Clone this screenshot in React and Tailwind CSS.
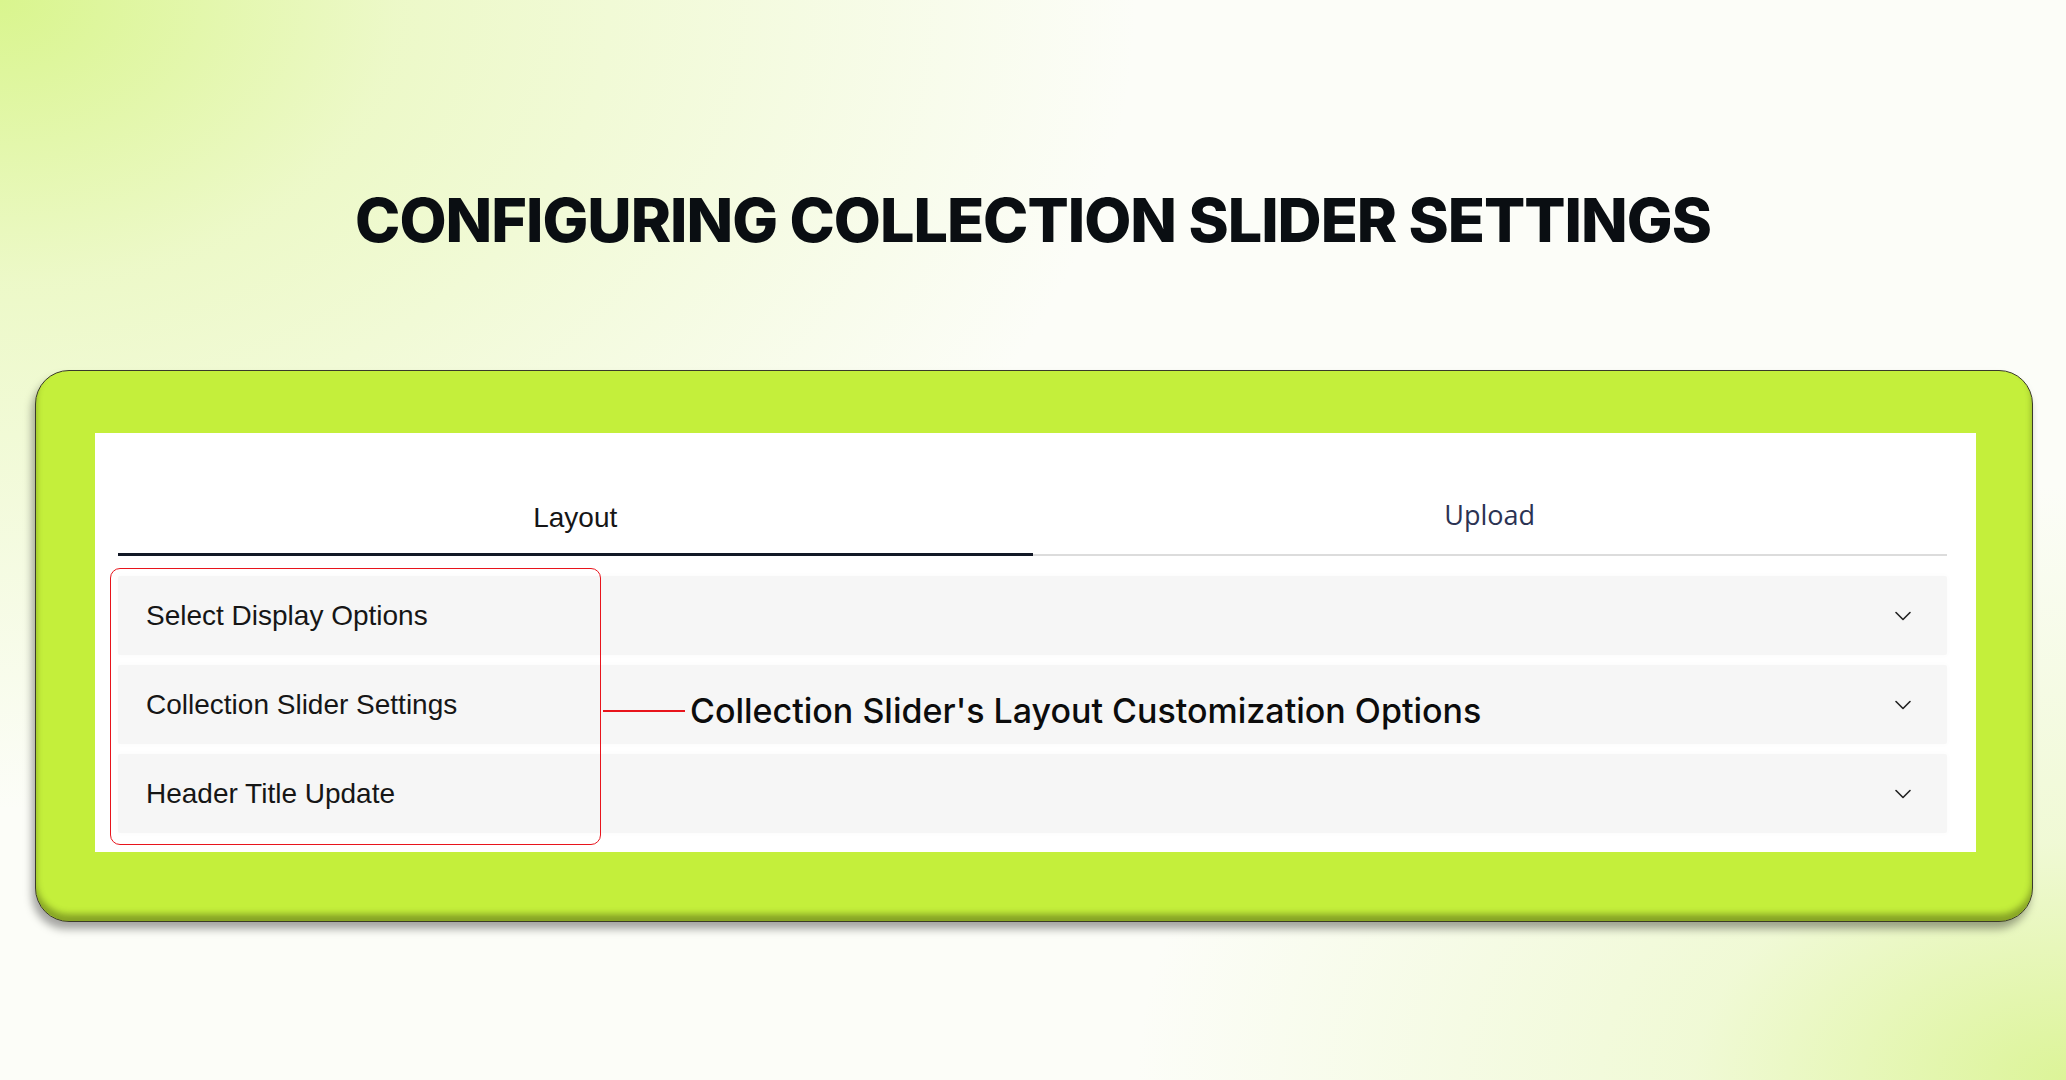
import { ChevronDown } from "lucide-react";

const sections = ["Select Display Options", "Collection Slider Settings", "Header Title Update"];

function AccordionRow({ title }) {
  return (
    <div className="flex h-[79px] items-center justify-between rounded-[2px] bg-[#f6f6f6] pl-[28px] pr-[30px] shadow-[0_0_6px_rgba(0,0,0,0.025)]">
      <span className="font-['Liberation_Sans',Arial,sans-serif] text-[28px] leading-none text-[#161616]">{title}</span>
      <ChevronDown size={28} strokeWidth={1.4} className="text-[#222]" />
    </div>
  );
}

export default function App() {
  return (
    <div className="min-h-[1080px] w-full overflow-hidden bg-[#fcfdf8] bg-[radial-gradient(ellipse_55%_75%_at_0%_0%,#d9f58e_0%,rgba(230,247,180,0.7)_35%,rgba(252,253,248,0)_100%),radial-gradient(ellipse_45%_55%_at_100%_100%,#dcf498_0%,rgba(232,247,190,0.6)_40%,rgba(252,253,248,0)_100%)]">
      <div className="flex h-[370px] items-start justify-center pt-[184px]">
        <h1 className="font-['Inter',sans-serif] text-[61px] font-extrabold uppercase leading-[72px] tracking-[-1px] text-[#0a0e12]">
          Configuring Collection Slider Settings
        </h1>
      </div>

      <div className="pl-[35px] pr-[33px]">
        <div className="rounded-[34px] border border-[#3a3a2a] bg-[#c4ef3b] pb-[69px] pl-[59px] pr-[56px] pt-[62px] shadow-[inset_0_-7px_6px_rgba(60,70,10,0.45),-3px_7px_8px_rgba(0,0,0,0.35)]">
          <div className="bg-white px-[23px] pb-[19px] pt-[48px] pr-[29px]">
            {/* tabs */}
            <div className="flex">
              <div className="flex flex-1 justify-center border-b-[3px] border-[#121826] pb-[22px] pt-[23px]">
                <span className="font-['Liberation_Sans',Arial,sans-serif] text-[28px] leading-[27px] text-[#161616]">Layout</span>
              </div>
              <div className="flex flex-1 justify-center border-b-2 border-[#dcdcdc] pb-[25px] pt-[20px]">
                <span className="font-['Open_Sans',sans-serif] text-[27px] leading-[27px] text-[#2b3353]">Upload</span>
              </div>
            </div>

            {/* accordion */}
            <div className="relative mt-[20px] flex flex-col gap-[10px]">
              {sections.map((s) => (
                <AccordionRow key={s} title={s} />
              ))}

              <div className="pointer-events-none absolute left-[-8px] top-[-8px] h-[277px] w-[491px] rounded-[10px] border-[1.5px] border-[#e8141c]" />
              <div className="pointer-events-none absolute left-[485px] top-[134px] h-[1.5px] w-[82px] bg-[#e8141c]" />
              <span className="pointer-events-none absolute left-[572px] top-[115px] font-['Inter',sans-serif] text-[34px] font-medium leading-[40px] text-[#0c0c0c]">
                Collection Slider's Layout Customization Options
              </span>
            </div>
          </div>
        </div>
      </div>
    </div>
  );
}
